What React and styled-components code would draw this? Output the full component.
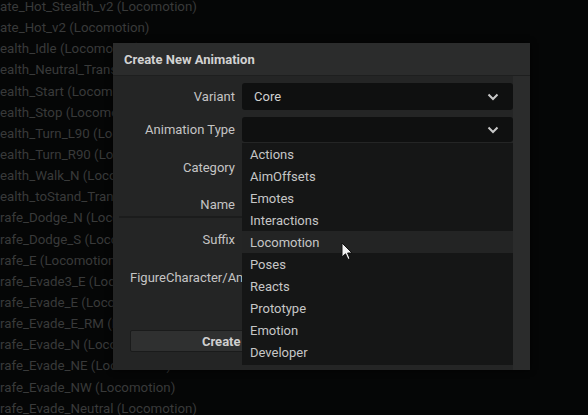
import React from "react"
import styled, { createGlobalStyle } from "styled-components"

const GlobalStyle = createGlobalStyle`
    html, body {
        margin: 0;
        padding: 0;
        background: #050606;
        overflow: hidden;
    }
`

const Page = styled.div`
    position: relative;
    width: 588px;
    height: 415px;
    overflow: hidden;
    background: #050606;
    font-family: Roboto, "Noto Sans", sans-serif;
`

const AssetList = styled.div`
    display: flex;
    flex-direction: column;
    margin-top: -4px;
`

const AssetRow = styled.div`
    height: 21.15px;
    line-height: 21px;
    font-size: 13.3px;
    color: #393a3a;
    white-space: nowrap;
`

const Dialog = styled.div`
    position: absolute;
    left: 113px;
    top: 43px;
    width: 417px;
    height: 327px;
    display: flex;
    flex-direction: column;
    background: #262727;
    box-shadow: 0 0 6px rgba(0, 0, 0, 0.8);
`

const TitleBar = styled.div`
    height: 32px;
    display: flex;
    align-items: center;
    padding-left: 11px;
    background: #2b2c2c;
    border-bottom: 1px solid #1e1f1f;
    color: #d2d2d2;
    font-size: 13px;
    font-weight: bold;
`

const Body = styled.div`
    flex: 1;
    display: flex;
`

const Form = styled.div`
    flex: 1;
    display: flex;
    flex-direction: column;
    padding: 7px 0 0 6px;
    background: #242525;
`

const ScrollTrack = styled.div`
    width: 17px;
    background: #2b2c2c;
`

const Row = styled.div`
    display: grid;
    grid-template-columns: 116px 1fr;
    column-gap: 7px;
    align-items: center;
    height: ${p => p.h}px;
    margin-bottom: ${p => p.mb || 0}px;
    border-bottom: ${p => (p.line ? "2px solid #1b1c1c" : "none")};
`

const Label = styled.div`
    text-align: right;
    font-size: 13px;
    color: #c4c4c4;
    white-space: nowrap;
`

const PathLabel = styled.div`
    padding-left: 11px;
    font-size: 13px;
    color: #c4c4c4;
    white-space: nowrap;
    height: ${p => p.h}px;
    display: flex;
    align-items: center;
`

const SelectBox = styled.div`
    position: relative;
    height: ${p => p.h}px;
    display: flex;
    align-items: center;
    justify-content: space-between;
    padding: 0 14px 0 12px;
    background: #0f1010;
    border-radius: 3px;
    color: #d0d0d0;
    font-size: 13px;
`

const Chevron = () => (
    <svg width="12" height="8" viewBox="0 0 12 8">
        <polyline points="1.5,1.5 6,6 10.5,1.5" fill="none" stroke="#c8c8c8" strokeWidth="2" />
    </svg>
)

const Menu = styled.div`
    position: absolute;
    left: 0;
    right: 0;
    top: 100%;
    margin-top: 1px;
    padding-bottom: 2px;
    display: flex;
    flex-direction: column;
    background: #151616;
    z-index: 2;
`

const MenuItem = styled.div`
    height: 22px;
    display: flex;
    align-items: center;
    padding-left: 8px;
    font-size: 13px;
    color: #c6c6c6;
    background: ${p => (p.hover ? "#232424" : "transparent")};
`

const Buttons = styled.div`
    display: grid;
    grid-template-columns: 1fr 1fr;
    column-gap: 8px;
    padding: 0 10px 0 11px;
    margin-top: 36px;
`

const Button = styled.div`
    height: 20px;
    display: flex;
    align-items: center;
    justify-content: center;
    background: #2f3030;
    border: 1px solid #1a1b1b;
    border-radius: 2px;
    color: #cfcfcf;
    font-size: 13px;
    font-weight: bold;
`

const Cursor = styled.svg`
    position: absolute;
    left: 341px;
    top: 242px;
    z-index: 5;
`

const assets = [
    "ate_Hot_Stealth_v2 (Locomotion)",
    "ate_Hot_v2 (Locomotion)",
    "ealth_Idle (Locomotion)",
    "ealth_Neutral_Transition (Locomotion)",
    "ealth_Start (Locomotion)",
    "ealth_Stop (Locomotion)",
    "ealth_Turn_L90 (Locomotion)",
    "ealth_Turn_R90 (Locomotion)",
    "ealth_Walk_N (Locomotion)",
    "ealth_toStand_Transition (Locomotion)",
    "rafe_Dodge_N (Locomotion)",
    "rafe_Dodge_S (Locomotion)",
    "rafe_E (Locomotion)",
    "rafe_Evade3_E (Locomotion)",
    "rafe_Evade_E (Locomotion)",
    "rafe_Evade_E_RM (Locomotion)",
    "rafe_Evade_N (Locomotion)",
    "rafe_Evade_NE (Locomotion)",
    "rafe_Evade_NW (Locomotion)",
    "rafe_Evade_Neutral (Locomotion)",
]

const types = [
    "Actions", "AimOffsets", "Emotes", "Interactions", "Locomotion",
    "Poses", "Reacts", "Prototype", "Emotion", "Developer",
]

const App = () => {
    return (
        <Page>
            <GlobalStyle />
            <AssetList>
                {assets.map(a => <AssetRow key={a}>{a}</AssetRow>)}
            </AssetList>

            <Dialog>
                <TitleBar>Create New Animation</TitleBar>
                <Body>
                    <Form>
                        <Row h={27} mb={7}>
                            <Label>Variant</Label>
                            <SelectBox h={27}>
                                <span>Core</span>
                                <Chevron />
                            </SelectBox>
                        </Row>
                        <Row h={25}>
                            <Label>Animation Type</Label>
                            <SelectBox h={25}>
                                <span></span>
                                <Chevron />
                                <Menu>
                                    {types.map(t => (
                                        <MenuItem key={t} hover={t === "Locomotion"}>{t}</MenuItem>
                                    ))}
                                </Menu>
                            </SelectBox>
                        </Row>
                        <Row h={50}>
                            <Label>Category</Label>
                            <div />
                        </Row>
                        <Row h={24} line>
                            <Label>Name</Label>
                            <div />
                        </Row>
                        <Row h={42}>
                            <Label>Suffix</Label>
                            <div />
                        </Row>
                        <PathLabel h={34}>FigureCharacter/Animations</PathLabel>
                        <Buttons>
                            <Button>Create</Button>
                            <Button>Cancel</Button>
                        </Buttons>
                    </Form>
                    <ScrollTrack />
                </Body>
            </Dialog>

            <Cursor width="12" height="19" viewBox="0 0 12 19">
                <path d="M1 1 L1 15 L4.5 11.8 L7 17.5 L9 16.6 L6.6 11 L11 11 Z" fill="#f2f2f2" stroke="#111" strokeWidth="1" />
            </Cursor>
        </Page>
    )
}

export default App
